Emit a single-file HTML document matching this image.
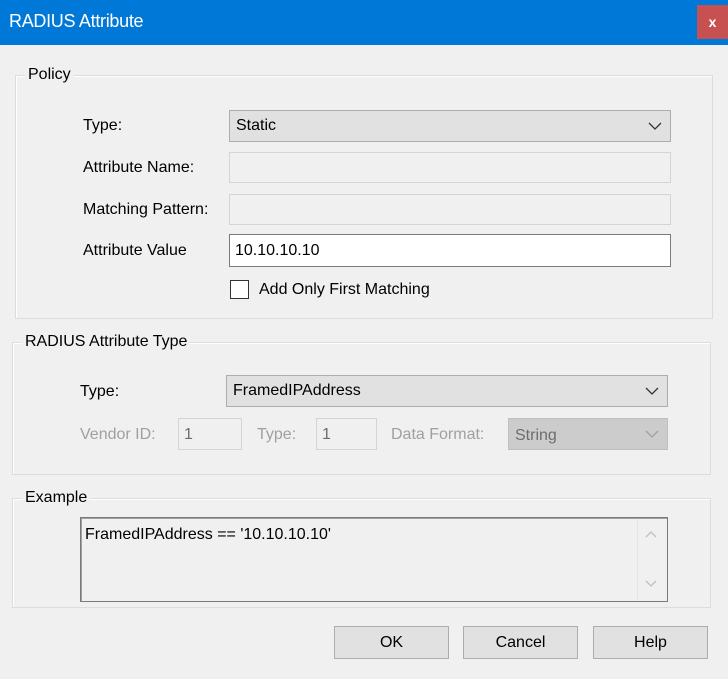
<!DOCTYPE html>
<html><head><meta charset="utf-8"><style>
*{box-sizing:border-box;margin:0;padding:0}
body{width:728px;height:679px;background:#f0f0f0;font-family:"Liberation Sans",sans-serif;font-size:16px;color:#000;position:relative;overflow:hidden}
.a{position:absolute;white-space:nowrap}
.title{left:0;top:0;width:728px;height:45px;background:#0078d7;color:#fff;font-size:18px;padding:11px 0 0 9px;letter-spacing:-0.3px}
.close{left:697px;top:5px;width:31px;height:34px;background:#c75050;color:#fff;font-size:14px;font-weight:bold;text-align:center;line-height:34px}
.grp{position:absolute;border:1px solid #dcdcdc;box-shadow:inset 1px 1px 0 #fff}
.lg{position:absolute;background:#f0f0f0;padding:0 3px;white-space:nowrap}
.combo{position:absolute;background:#e1e1e1;border:1px solid #adadad;padding:6px 0 0 6px}
.combo svg{position:absolute;right:8px;top:10px}
.box{position:absolute;background:#f0f0f0;border:1px solid #d4d4d4}
.dis{color:#a0a0a0}
.btn{position:absolute;background:#e1e1e1;border:1px solid #adadad;text-align:center;line-height:31px;height:33px;width:115px;top:626px}
</style></head><body>
<div class="a title">RADIUS Attribute</div>
<div class="a close">x</div>

<div class="grp" style="left:15px;top:75px;width:698px;height:244px"></div>
<div class="lg" style="left:25px;top:66px">Policy</div>
<div class="a" style="left:83px;top:117px">Type:</div>
<div class="combo" style="left:229px;top:110px;width:442px;height:32px">Static<svg width="14" height="10"><path d="M1 2l6 6 6-6" stroke="#333" fill="none" stroke-width="1.3"/></svg></div>
<div class="a" style="left:83px;top:159px">Attribute Name:</div>
<div class="box" style="left:229px;top:152px;width:442px;height:31px"></div>
<div class="a" style="left:83px;top:201px">Matching Pattern:</div>
<div class="box" style="left:229px;top:194px;width:442px;height:31px"></div>
<div class="a" style="left:83px;top:242px">Attribute Value</div>
<div class="box" style="left:229px;top:234px;width:442px;height:33px;background:#fff;border-color:#7a7a7a;padding:7px 0 0 5px">10.10.10.10</div>
<div class="box" style="left:230px;top:280px;width:19px;height:19px;background:#fff;border:1px solid #333"></div>
<div class="a" style="left:259px;top:281px">Add Only First Matching</div>

<div class="grp" style="left:12px;top:342px;width:699px;height:133px"></div>
<div class="lg" style="left:22px;top:333px">RADIUS Attribute Type</div>
<div class="a" style="left:80px;top:383px">Type:</div>
<div class="combo" style="left:226px;top:375px;width:442px;height:32px">FramedIPAddress<svg width="14" height="10"><path d="M1 2l6 6 6-6" stroke="#333" fill="none" stroke-width="1.3"/></svg></div>
<div class="a dis" style="left:80px;top:426px">Vendor ID:</div>
<div class="box" style="left:178px;top:418px;width:64px;height:32px;padding:7px 0 0 5px;color:#6d6d6d">1</div>
<div class="a dis" style="left:257px;top:426px">Type:</div>
<div class="box" style="left:316px;top:418px;width:61px;height:32px;padding:7px 0 0 5px;color:#6d6d6d">1</div>
<div class="a dis" style="left:391px;top:426px">Data Format:</div>
<div class="combo" style="left:508px;top:418px;width:160px;height:32px;background:#cccccc;border-color:#bfbfbf;color:#6d6d6d;padding-top:8px">String<svg width="14" height="10"><path d="M1 2l6 6 6-6" stroke="#a0a0a0" fill="none" stroke-width="1.3"/></svg></div>

<div class="grp" style="left:12px;top:498px;width:699px;height:110px"></div>
<div class="lg" style="left:22px;top:489px">Example</div>
<div class="box" style="left:80px;top:517px;width:588px;height:85px;background:#f0f0f0;border:1px solid #7a7a7a;box-shadow:inset 1px 1px 0 #a0a0a0;padding:8px 0 0 4px">FramedIPAddress == '10.10.10.10'</div>
<div class="a" style="left:637px;top:519px;width:1px;height:81px;background:#e4e4e4"></div>
<svg class="a" style="left:645px;top:530px" width="12" height="8"><path d="M1 7l5-5 5 5" stroke="#c0c0c0" fill="none" stroke-width="1.3"/></svg>
<svg class="a" style="left:645px;top:580px" width="12" height="8"><path d="M1 1l5 5 5-5" stroke="#c0c0c0" fill="none" stroke-width="1.3"/></svg>

<div class="btn" style="left:334px">OK</div>
<div class="btn" style="left:463px">Cancel</div>
<div class="btn" style="left:593px">Help</div>
</body></html>
